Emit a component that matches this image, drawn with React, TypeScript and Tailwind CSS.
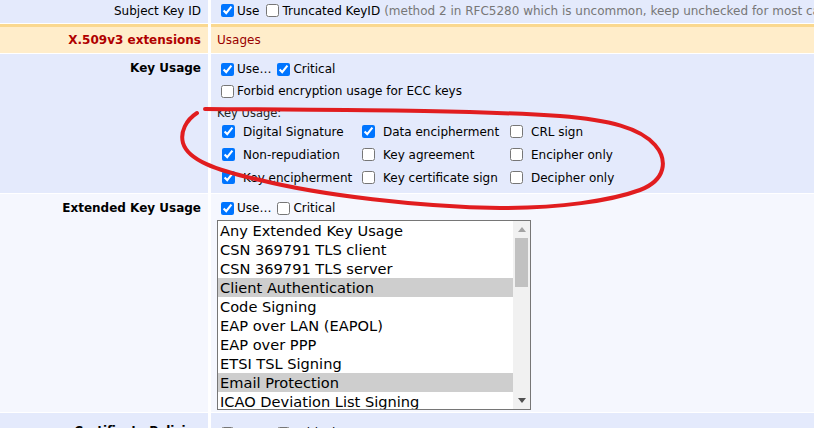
import clsx from "clsx";

const Cb = ({ checked = false, className }: { checked?: boolean; className?: string }) => (
  <input
    type="checkbox"
    defaultChecked={checked}
    className={clsx("h-[13px] w-[13px] shrink-0 align-middle", className ?? "m-[3px_3px_3px_4px]")}
  />
);

const usages = [
  ["Digital Signature", true, "Data encipherment", true, "CRL sign", false],
  ["Non-repudiation", true, "Key agreement", false, "Encipher only", false],
  ["Key encipherment", true, "Key certificate sign", false, "Decipher only", false],
] as const;

const ekus = [
  { name: "Any Extended Key Usage" },
  { name: "CSN 369791 TLS client" },
  { name: "CSN 369791 TLS server" },
  { name: "Client Authentication", selected: true },
  { name: "Code Signing" },
  { name: "EAP over LAN (EAPOL)" },
  { name: "EAP over PPP" },
  { name: "ETSI TSL Signing" },
  { name: "Email Protection", selected: true },
  { name: "ICAO Deviation List Signing" },
  { name: "IKE Intermediate" },
];

const App = () => {
  return (
    <div className="relative h-[428px] w-[814px] overflow-hidden bg-white font-['DejaVu_Sans',sans-serif] text-[12px] text-black">
      <div className="flex flex-col gap-[1px]">
        {/* Subject Key ID */}
        <div className="grid h-[23px] grid-cols-[208px_1fr] gap-x-[3px]">
          <div className="flex items-center justify-end bg-[#e4eafc] pb-[2px] pr-[7px]">Subject Key ID</div>
          <div className="flex items-center whitespace-nowrap bg-[#e4eafc] pb-[2px] pl-[6px]">
            <Cb checked />
            <span>Use</span>
            <span className="w-[3px]" />
            <Cb />
            <span>Truncated KeyID</span>
            <span className="ml-[4px] text-[#777]">
              (method 2 in RFC5280 which is uncommon, keep unchecked for most cases)
            </span>
          </div>
        </div>

        {/* section header */}
        <div className="grid h-[29px] grid-cols-[208px_1fr] gap-x-[3px]">
          <div className="flex items-center justify-end border-t-[3px] border-[#fad88f] bg-[#ffedca] pr-[7px] font-bold text-[#b00000]">
            X.509v3 extensions
          </div>
          <div className="flex items-center border-t-[3px] border-[#fad88f] bg-[#ffedca] pl-[6px] text-[#990000]">
            Usages
          </div>
        </div>

        {/* Key Usage */}
        <div className="grid h-[139px] grid-cols-[208px_1fr] gap-x-[3px]">
          <div className="bg-[#e4eafc] pt-[3px] pr-[7px]">
            <div className="flex h-[22px] items-center justify-end font-bold">Key Usage</div>
          </div>
          <div className="bg-[#e4eafc] pl-[6px] pt-[4px]">
            <div className="flex h-[22px] items-center">
              <Cb checked />
              <span>Use…</span>
              <Cb checked className="m-[3px_3px_3px_6px]" />
              <span>Critical</span>
            </div>
            <div className="flex h-[22px] items-center">
              <Cb />
              <span>Forbid encryption usage for ECC keys</span>
            </div>
            <div className="h-[18px] pt-[4px] text-[11.5px] leading-[14px] text-[#222]">Key Usage:</div>
            <div className="grid grid-cols-[140px_148px_auto]">
              {usages.map((row) =>
                [0, 2, 4].map((i) => (
                  <div key={row[i] as string} className="flex h-[23px] items-center">
                    <Cb checked={row[i + 1] as boolean} className="ml-[5px] mr-[8px]" />
                    <span>{row[i]}</span>
                  </div>
                ))
              )}
            </div>
          </div>
        </div>

        {/* Extended Key Usage */}
        <div className="grid h-[218px] grid-cols-[208px_1fr] gap-x-[3px]">
          <div className="bg-[#f5f7fe] pt-[3px] pr-[7px]">
            <div className="flex h-[22px] items-center justify-end font-bold">Extended Key Usage</div>
          </div>
          <div className="bg-[#f5f7fe] pl-[6px] pt-[3px]">
            <div className="flex h-[22px] items-center">
              <Cb checked />
              <span>Use…</span>
              <Cb className="m-[3px_3px_3px_6px]" />
              <span>Critical</span>
            </div>
            <div className="mt-[1px] flex h-[190px] w-[314px] overflow-hidden border border-[#767676] bg-white">
              <div className="flex-1 overflow-hidden">
                {ekus.map((e) => (
                  <div
                    key={e.name}
                    className={clsx(
                      "h-[19px] whitespace-nowrap pl-[2px] text-[14.6px] leading-[19px]",
                      e.selected && "bg-[#cecece]"
                    )}
                  >
                    {e.name}
                  </div>
                ))}
              </div>
              <div className="flex w-[17px] flex-col items-center bg-[#f1f1f1]">
                <div className="flex h-[17px] w-full items-center justify-center">
                  <svg width="8" height="5" viewBox="0 0 8 5">
                    <path d="M0 5 L4 0 L8 5 Z" fill="#a3a3a3" />
                  </svg>
                </div>
                <div className="h-[49px] w-[13px] bg-[#c1c1c1]" />
                <div className="flex-1" />
                <div className="flex h-[17px] w-full items-center justify-center">
                  <svg width="8" height="5" viewBox="0 0 8 5">
                    <path d="M0 0 L8 0 L4 5 Z" fill="#505050" />
                  </svg>
                </div>
              </div>
            </div>
          </div>
        </div>

        {/* Certificate Policies */}
        <div className="grid h-[40px] grid-cols-[208px_1fr] gap-x-[3px]">
          <div className="bg-[#e4eafc] pt-[7px] pr-[7px]">
            <div className="flex h-[22px] items-center justify-end font-bold">Certificate Policies</div>
          </div>
          <div className="bg-[#e4eafc] pl-[6px] pt-[9px]">
            <div className="flex h-[22px] items-center">
              <Cb />
              <span>Use…</span>
              <Cb className="m-[3px_3px_3px_6px]" />
              <span>Critical</span>
            </div>
          </div>
        </div>
      </div>

      {/* hand-drawn annotation */}
      <svg className="pointer-events-none absolute left-0 top-0" width="814" height="428">
        <path
          d="M 197 113 C 186 120, 180 132, 183 143 C 188 160, 215 170, 260 180 C 320 195, 420 207, 500 208 C 560 208, 610 201, 640 190 C 666 180, 668 160, 655 145 C 640 128, 610 120, 560 116 C 470 110, 350 110, 205 109"
          fill="none"
          stroke="#e11d1f"
          strokeWidth="4"
          strokeLinecap="round"
        />
      </svg>
    </div>
  );
};

export default App;
